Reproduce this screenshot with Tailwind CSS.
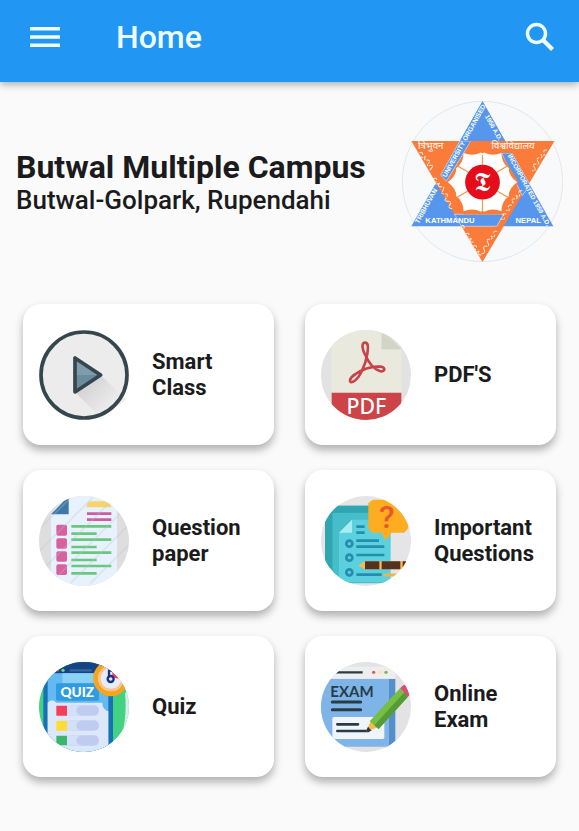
<!DOCTYPE html>
<html lang="en">
<head>
<meta charset="utf-8">
<meta name="viewport" content="width=device-width, initial-scale=1">
<title>Home</title>
<script src="https://cdn.jsdelivr.net/npm/@tailwindcss/browser@4"></script>
</head>
<body class="min-h-screen bg-[#fafafa] font-[Roboto,sans-serif] text-[#1b1b1d]">
<header class="relative flex h-[82px] items-center bg-[#2196f3] pb-2 pl-[30px] pr-6 text-[#edfdff] shadow-[0_2px_8px_rgba(0,0,0,0.35)]">
  <button type="button" aria-label="Open menu" class="mr-14">
    <svg class="block h-5 w-[30px]" viewBox="0 0 30 20" fill="currentColor"><path d="M0 0h30v3.4H0zM0 8.3h30v3.4H0zM0 16.6h30V20H0z"/></svg>
  </button>
  <h1 class="flex-1 text-[32px] leading-10 font-medium">Home</h1>
  <button type="button" aria-label="Search">
    <svg class="block h-[30px] w-[30px]" viewBox="0 0 30 30" fill="none" stroke="currentColor" stroke-width="3.5"><circle cx="11.5" cy="11.5" r="9"/><path d="M18 18l9.500 9.500" stroke-width="4.200"/></svg>
  </button>
</header>
<main>
  <section class="flex items-center justify-between pt-[19px] pr-4 pl-4">
    <div>
      <h2 class="text-[32px] leading-9 font-bold">Butwal Multiple Campus</h2>
      <p class="text-[26px] leading-[30px] font-medium">Butwal-Golpark, Rupendahi</p>
    </div>
    <svg class="h-[161px] w-[161px] shrink-0" viewBox="22 28 482 482" role="img" aria-label="Tribhuvan University emblem">
      <defs>
        <path id="petal" d="M0 0C-30-28-58-55-44-77Q-16-80 0-104Q16-80 44-77C58-55 30-28 0 0Z"/>
      </defs>
      <circle cx="263" cy="269" r="240" fill="#f7f9fa" stroke="#d3dfe9" stroke-width="2"/>
      <path d="M263 28L50 403H475Z" fill="#5696ec"/>
      <path d="M50 148H478L263 510Z" fill="#fb7c3a"/>
      <g fill="#5696ec" stroke="#fff" stroke-width="1.500">
        <path d="M195 148L138 250L155 268L228 148Z"/>
        <path d="M320 184L351 184L405 279L382 311Z"/>
        <path d="M179 367H326L306 403H200Z"/>
      </g>
      <path d="M263 30L197 146L228 148H331Z" fill="#5696ec"/>
      <path d="M228 148H478L456 184H210Z" fill="#fb7c3a"/>
      <path d="M213 181H315L371 270L318 368H208L156 270Z" fill="#fb7c3a"/>
      <g fill="#fff" transform="translate(263 271)">
        <use href="#petal" transform="rotate(-33)"/><use href="#petal" transform="rotate(33)"/>
        <use href="#petal" transform="rotate(90)"/><use href="#petal" transform="rotate(147)"/>
        <use href="#petal" transform="rotate(213)"/><use href="#petal" transform="rotate(270)"/>
      </g>
      <g fill="none" stroke="#eda05c" stroke-width="4"><path d="M263 190V222M263 322V358M188 222L222 242M338 222L304 242M188 316L222 296M338 316L304 296"/></g>
      <circle cx="263" cy="271" r="52" fill="#e50d19"/>
      <text x="263" y="298" text-anchor="middle" font-size="82" font-family="DejaVu Sans, DejaVu Serif, serif" fill="#fff">𝕿</text>
      <g fill="#fff" font-family="Liberation Sans, sans-serif" font-weight="700">
        <text x="92" y="394" font-size="23">KATHMANDU</text>
        <text x="362" y="394" font-size="23">NEPAL</text>
        <text transform="translate(154 258) rotate(-61)" font-size="20">UNIVERSITY ORGANISED</text>
        <text transform="translate(270 74) rotate(61)" font-size="19">1956 A.D.</text>
        <text transform="translate(338 192) rotate(61)" font-size="19">INCORPORATED 1959 A.D.</text>
        <text transform="translate(72 396) rotate(-61)" font-size="20">TRIBHUVAN</text>
      </g>
      <g fill="#fff" font-family="Noto Sans Devanagari, Noto Sans, sans-serif" font-size="29">
        <text x="70" y="173">त्रिभुवन</text>
        <text x="290" y="173">विश्वविद्यालय</text>
      </g>
      <g fill="none" stroke="#ffe9d8" stroke-width="3" stroke-linecap="round" stroke-linejoin="round" stroke-dasharray="13 5 7 5">
        <path d="M75 183q12-3 7 8t10 3q-7 12 5 11t4 10q-8 9 6 6t-1 13"/>
        <path d="M116 260q14-4 8 9t10 5q-8 12 5 11t5 12q-8 10 6 9t4 13q-9 9 5 9t6 12q-8 8 6 10"/>
        <path d="M455 175q-12-2-7 8t-10 5q8 10-4 10t-5 11q7 9-6 8t-3 12q4 8-8 8"/>
        <path d="M381 297q-13-2-8 9t-9 5q7 11-5 10t-4 12M350 340q-13-2-8 9t-8 6M334 366q-13-2-7 9t-9 6"/>
        <path d="M202 400q11 3 3 12M213 425q14-4 7 9t10 5q-8 12 5 11M236 462q14-4 7 9t10 6q-7 11 5 12M306 418q-13-2-8 9t-9 5q7 11-5 10t-4 12q5 10-7 9t-4 12q3 9-8 10"/>
      </g>
    </svg>
  </section>
  <nav aria-label="Sections" class="grid grid-cols-2 gap-x-[31px] gap-y-[25px] px-[23px] pt-[42px] pb-[54px] text-[22px] leading-[26px] font-bold">
    <a href="#smart-class" class="flex h-[141px] items-center gap-[23px] rounded-[18px] bg-white pl-4 shadow-[0_5px_9px_rgba(0,0,0,0.3)]">
      <svg class="h-[90px] w-[90px] shrink-0" viewBox="26 28 270 270" aria-hidden="true">
        <linearGradient id="shade" gradientUnits="userSpaceOnUse" x1="165" y1="170" x2="245" y2="250"><stop stop-color="#d0cfd2"/><stop offset="1" stop-color="#ececec"/></linearGradient>
        <circle cx="161" cy="163" r="129" fill="#ececec"/>
        <path d="M134 214L203 283Q270 258 286 236L211 163Z" fill="url(#shade)"/>
        <circle cx="161" cy="163" r="129" fill="none" stroke="#35464d" stroke-width="11"/>
        <path d="M134 112V214L211 163Z" fill="#6c8c9d"/><path d="M134 112V163H211Z" fill="#7e9cac"/>
        <path d="M134 112V214L211 163Z" fill="none" stroke="#35464d" stroke-width="11" stroke-linejoin="round"/>
      </svg>
      <span>Smart<br>Class</span>
    </a>
    <a href="#pdfs" class="flex h-[141px] items-center gap-[23px] rounded-[18px] bg-white pl-4 shadow-[0_5px_9px_rgba(0,0,0,0.3)]">
      <svg class="h-[90px] w-[90px] shrink-0" viewBox="26 28 270 270" aria-hidden="true">
        <clipPath id="c2"><circle cx="161" cy="163" r="135"/></clipPath>
        <g clip-path="url(#c2)">
          <path d="M20 20H300V300H20Z" fill="#e2e2e2"/>
          <path d="M58 20H208L267 86V216H58Z" fill="#e9e9de"/><path d="M208 20V86H267Z" fill="#d5d7c8"/><path d="M208 20H300V86H267Z" fill="#e0e1d8"/><path d="M208 40V86H267Z" fill="#d2d5c5"/>
          <path d="M58 216H267V300H58Z" fill="#cc4448"/>
          <path d="M158 66C145 66 151 91 160 105C170 128 182 143 202 151C219 156 221 139 205 138C180 136 150 146 130 160C107 174 110 190 123 183C143 173 160 130 165 99C168 77 168 66 158 66Z" fill="none" stroke="#c84347" stroke-width="8" stroke-linejoin="round"/>
        </g>
        <text x="162" y="280" text-anchor="middle" fill="#fff" font-family="Noto Sans, sans-serif" font-weight="500" font-size="64">PDF</text>
      </svg>
      <span>PDF'S</span>
    </a>
    <a href="#question-paper" class="flex h-[141px] items-center gap-[23px] rounded-[18px] bg-white pl-4 shadow-[0_5px_9px_rgba(0,0,0,0.3)]">
      <svg class="h-[90px] w-[90px] shrink-0" viewBox="26 28 270 270" aria-hidden="true">
        <clipPath id="c3"><circle cx="161" cy="163" r="135"/></clipPath>
        <g clip-path="url(#c3)">
          <path d="M20 20H300V300H20Z" fill="#dededf"/>
          <path d="M62 82L115 20H260V300H62Z" fill="#e8f2fd"/>
          <path d="M62 83L115 28V83Z" fill="#3d78a8"/>
          <path d="M168 62Q170 44 182 44H230Q241 46 243 62Z" fill="#f6d36f"/>
          <path d="M170 81H243M170 99H243" stroke="#d05c9e" stroke-width="8"/>
          <g fill="#d8609e"><rect x="78" y="114" width="32" height="33" rx="5"/><rect x="78" y="155" width="32" height="31" rx="5"/><rect x="78" y="194" width="32" height="31" rx="5"/><rect x="78" y="233" width="32" height="32" rx="5"/></g>
          <path d="M123 119H243M123 141H199M123 159H243M123 181H199M123 198H243M123 220H199M123 238H243M123 260H199" stroke="#69c77f" stroke-width="8"/>
          <path d="M10 144L124 30M20 200L190 30M30 256L250 36M70 280L280 70M120 290L300 110M180 290L300 170" stroke="#b9c2cd" stroke-opacity=".3" stroke-width="5"/>
        </g>
      </svg>
      <span>Question<br>paper</span>
    </a>
    <a href="#important-questions" class="flex h-[141px] items-center gap-[23px] rounded-[18px] bg-white pl-4 shadow-[0_5px_9px_rgba(0,0,0,0.3)]">
      <svg class="h-[90px] w-[90px] shrink-0" viewBox="26 28 270 270" aria-hidden="true">
        <clipPath id="c4"><circle cx="161" cy="163" r="135"/></clipPath>
        <g clip-path="url(#c4)">
          <path d="M20 20H300V300H20Z" fill="#e5e5e7"/>
          <path d="M38 57H190V264H38Z" fill="#36afb9"/><path d="M60 78H220V290H60Z" fill="#46bdc8"/>
          <path d="M38 57H190V78H60V245H38Z" fill="#30a6b1"/>
          <path d="M80 138L119 99H220L235 120V286H80Z" fill="#5bd0df"/><path d="M80 138L119 99V138Z" fill="#a9edf3"/>
          <g fill="none" stroke="#268daf" stroke-width="8"><path d="M132 120H157M132 138H157M132 162H200M132 180H216M132 205H216M132 264H208"/><circle cx="111" cy="171" r="9"/><circle cx="111" cy="213" r="9"/><circle cx="111" cy="257" r="9"/></g>
          <path d="M182 39H270L288 66V124L276 138H238L218 162L209 138H178L168 124V49Z" fill="#ffad20"/>
          <text x="223" y="123" text-anchor="middle" fill="#e45a2b" font-family="Roboto, sans-serif" font-weight="500" font-size="96">?</text>
          <path d="M138 236L158 224H300V248H158Z" fill="#f6bb4c"/><path d="M158 224H201V248H158ZM208 224H264V248H208ZM271 224H300V248H271Z" fill="#57301f"/>
          <path d="M217 265H262" stroke="#e9b54f" stroke-width="9" stroke-linecap="round"/>
        </g>
      </svg>
      <span>Important<br>Questions</span>
    </a>
    <a href="#quiz" class="flex h-[141px] items-center gap-[23px] rounded-[18px] bg-white pl-4 shadow-[0_5px_9px_rgba(0,0,0,0.3)]">
      <svg class="h-[90px] w-[90px] shrink-0" viewBox="26 28 270 270" aria-hidden="true">
        <clipPath id="c5"><circle cx="161" cy="163" r="135"/></clipPath>
        <g clip-path="url(#c5)">
          <path d="M20 20H300V300H20Z" fill="#43d184"/><path d="M284 120H300V240H276Q290 190 284 120Z" fill="#d8edeb"/>
          <path d="M39 20H248V300H39Z" fill="#1672b5"/><path d="M39 20H248V62H39Z" fill="#154482"/>
          <path d="M52 62H234V300H52Z" fill="#64b9f1"/><path d="M96 62H205V92H96Z" fill="#8bd1f6"/>
          <path d="M52 150Q66 135 78 150H216Q216 171 234 176V300H52Z" fill="#dce7fa"/>
          <path d="M118 53H184" stroke="#3867a0" stroke-width="7"/><circle cx="98" cy="53" r="5" fill="#71d37c"/><circle cx="82" cy="53" r="4" fill="#df5b4e"/>
          <rect x="77" y="92" width="129" height="52" rx="5" fill="#2f9be2"/>
          <text x="141" y="133" text-anchor="middle" fill="#fff" font-family="Lato, sans-serif" font-weight="900" font-size="41">QUIZ</text>
          <rect x="110" y="158" width="96" height="31" rx="15" fill="#c0cbf0"/><rect x="110" y="203" width="96" height="31" rx="15" fill="#c0cbf0"/><rect x="110" y="248" width="96" height="31" rx="15" fill="#c0cbf0"/>
          <path d="M110 158H153Q138 164 138 174T153 189H110ZM110 203H153Q138 209 138 219T153 234H110ZM110 248H153Q138 254 138 264T153 279H110Z" fill="#d3e0f9"/>
          <path d="M78 159H110V189H78Z" fill="#f53e59"/><path d="M78 204H110V234H78Z" fill="#ffdb38"/><path d="M78 249H110V278H78Z" fill="#3bb66c"/>
          <circle cx="242" cy="77" r="46" fill="#e5edf6" stroke="#f5a51e" stroke-width="15"/><circle cx="242" cy="77" r="35" fill="none" stroke="#ffc18b" stroke-width="7"/>
          <path d="M246 74V54L261 62L265 78Z" fill="#ef4260"/><circle cx="241" cy="79" r="9" fill="#dfeaff" stroke="#202e86" stroke-width="7"/><path d="M236 74V54H247" fill="none" stroke="#202e86" stroke-width="7"/>
        </g>
      </svg>
      <span>Quiz</span>
    </a>
    <a href="#online-exam" class="flex h-[141px] items-center gap-[23px] rounded-[18px] bg-white pl-4 shadow-[0_5px_9px_rgba(0,0,0,0.3)]">
      <svg class="h-[90px] w-[90px] shrink-0" viewBox="26 28 270 270" aria-hidden="true">
        <clipPath id="c6"><circle cx="161" cy="163" r="135"/></clipPath>
        <g clip-path="url(#c6)">
          <path d="M20 20H300V300H20Z" fill="#e3e3e5"/>
          <path d="M20 78H229V282H20Z" fill="#7eb4e8"/><path d="M229 78H249V264L229 282Z" fill="#548fcb"/><path d="M20 42H229L249 50V78H20Z" fill="#eeeef0"/>
          <path d="M70 59H151" stroke="#293c45" stroke-width="7"/><circle cx="184" cy="59" r="5" fill="#e85760"/><path d="M195 59H211" stroke="#ffe1b6" stroke-width="7"/><circle cx="221" cy="59" r="5" fill="#77bb56"/>
          <text x="119" y="132" text-anchor="middle" fill="#273c48" font-family="Lato, sans-serif" font-weight="700" font-size="45">EXAM</text>
          <path d="M60 148H145M60 171H145" stroke="#293c45" stroke-width="9" stroke-linecap="round"/>
          <rect x="60" y="193" width="156" height="66" rx="5" fill="#f0f5fc"/>
          <path d="M75 215H137M75 235H168" stroke="#293c45" stroke-width="8" stroke-linecap="round"/>
          <path d="M160 238L177 202L196 224Z" fill="#f6b94f"/><path d="M160 238L167 222L178 234Z" fill="#283945"/>
          <path d="M172 206L263 107L287 132L199 229Z" fill="#75bf45"/><path d="M186 218L276 119L287 132L199 229Z" fill="#559b37"/>
          <path d="M263 107L273 98Q281 94 288 106L295 117Q294 126 287 132Z" fill="#d64e72"/>
        </g>
      </svg>
      <span>Online<br>Exam</span>
    </a>
  </nav>
</main>
</body>
</html>
